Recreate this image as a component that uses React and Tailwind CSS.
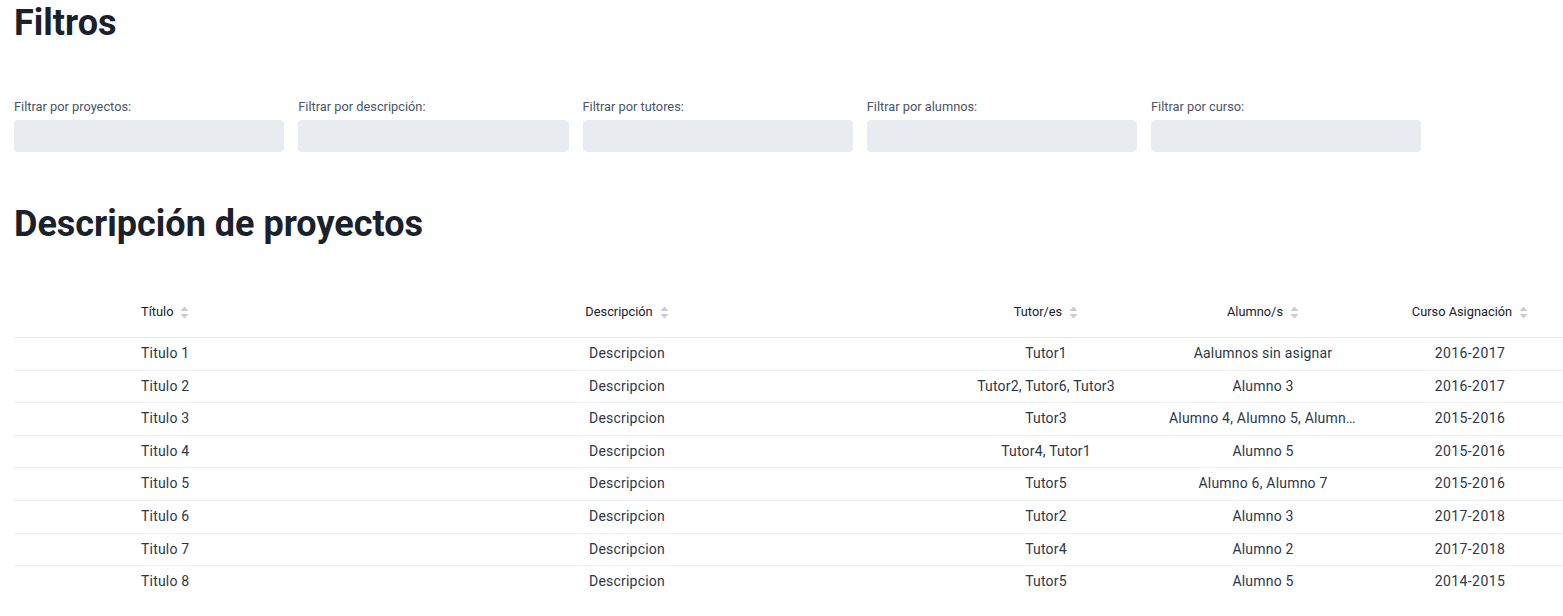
import React from "react";

const rows = [
  ["Titulo 1", "Descripcion", "Tutor1", "Aalumnos sin asignar", "2016-2017"],
  ["Titulo 2", "Descripcion", "Tutor2, Tutor6, Tutor3", "Alumno 3", "2016-2017"],
  ["Titulo 3", "Descripcion", "Tutor3", "Alumno 4, Alumno 5, Alumno 6", "2015-2016"],
  ["Titulo 4", "Descripcion", "Tutor4, Tutor1", "Alumno 5", "2015-2016"],
  ["Titulo 5", "Descripcion", "Tutor5", "Alumno 6, Alumno 7", "2015-2016"],
  ["Titulo 6", "Descripcion", "Tutor2", "Alumno 3", "2017-2018"],
  ["Titulo 7", "Descripcion", "Tutor4", "Alumno 2", "2017-2018"],
  ["Titulo 8", "Descripcion", "Tutor5", "Alumno 5", "2014-2015"],
];

const filters = [
  "Filtrar por proyectos:",
  "Filtrar por descripción:",
  "Filtrar por tutores:",
  "Filtrar por alumnos:",
  "Filtrar por curso:",
];

function SortIcon() {
  return (
    <svg width="9" height="13" viewBox="0 0 9 13" className="shrink-0">
      <path d="M4.5 0.5 L8.5 5 L0.5 5 Z" fill="#c9ccd2" />
      <path d="M0.5 8 L8.5 8 L4.5 12.5 Z" fill="#c9ccd2" />
    </svg>
  );
}

function Th({ children, align = "center", extra = "" }) {
  return (
    <th className={`pt-[18px] pb-[17px] font-normal text-[12.8px] leading-4 text-[#1a202c] ${extra}`}>
      <span className={`flex items-center gap-[7px] ${align === "left" ? "justify-start" : "justify-center"}`}>
        <span>{children}</span>
        <SortIcon />
      </span>
    </th>
  );
}

export default function App() {
  return (
    <div className="pl-[14px] bg-white min-h-screen font-['Roboto',sans-serif] text-[#1a202c]">
      <h1 className="pt-[3px] text-4xl leading-10 font-bold text-[#1a202c]">Filtros</h1>
      <div className="mt-[56px] flex gap-[14px]">
        {filters.map((f) => (
          <div key={f} className="w-[270.25px]">
            <label className="block text-[12.8px] leading-4 text-[#4a5568]">{f}</label>
            <input className="mt-[5px] block h-8 w-full rounded bg-[#e8ebef] outline-none" />
          </div>
        ))}
      </div>
      <h2 className="mt-[52px] text-4xl leading-10 font-bold text-[#1a202c]">Descripción de proyectos</h2>
      <table className="mt-[42px] w-[1549px] table-fixed border-collapse">
        <colgroup>
          <col className="w-[115px]" />
          <col className="w-[190px]" />
          <col className="w-[616px]" />
          <col className="w-[222px]" />
          <col className="w-[212px]" />
          <col className="w-[194px]" />
        </colgroup>
        <thead>
          <tr className="border-b border-[#e8ebee]">
            <th></th>
            <Th align="left" extra="pl-3 text-left">Título</Th>
            <Th extra="px-3">Descripción</Th>
            <Th extra="px-3">Tutor/es</Th>
            <Th extra="px-3">Alumno/s</Th>
            <Th extra="pl-3 pr-1">Curso Asignación</Th>
          </tr>
        </thead>
        <tbody>
          {rows.map((r, i) => (
            <tr key={i} className={i < rows.length - 1 ? "border-b border-[#eceef1]" : ""}>
              <td></td>
              <td className="pl-3 py-[6px] text-sm leading-[19.6px] text-[#2d3748] tracking-[0.2px] text-left truncate">{r[0]}</td>
              <td className="px-3 py-[6px] text-sm leading-[19.6px] text-[#2d3748] tracking-[0.2px] text-center truncate">{r[1]}</td>
              <td className="px-3 py-[6px] text-sm leading-[19.6px] text-[#2d3748] tracking-[0.2px] text-center truncate">{r[2]}</td>
              <td className="px-3 py-[6px] text-sm leading-[19.6px] text-[#2d3748] tracking-[0.2px] text-center truncate">{r[3]}</td>
              <td className="pl-3 pr-1 py-[6px] text-sm leading-[19.6px] text-[#2d3748] tracking-[0.4px] text-center truncate">{r[4]}</td>
            </tr>
          ))}
        </tbody>
      </table>
    </div>
  );
}
